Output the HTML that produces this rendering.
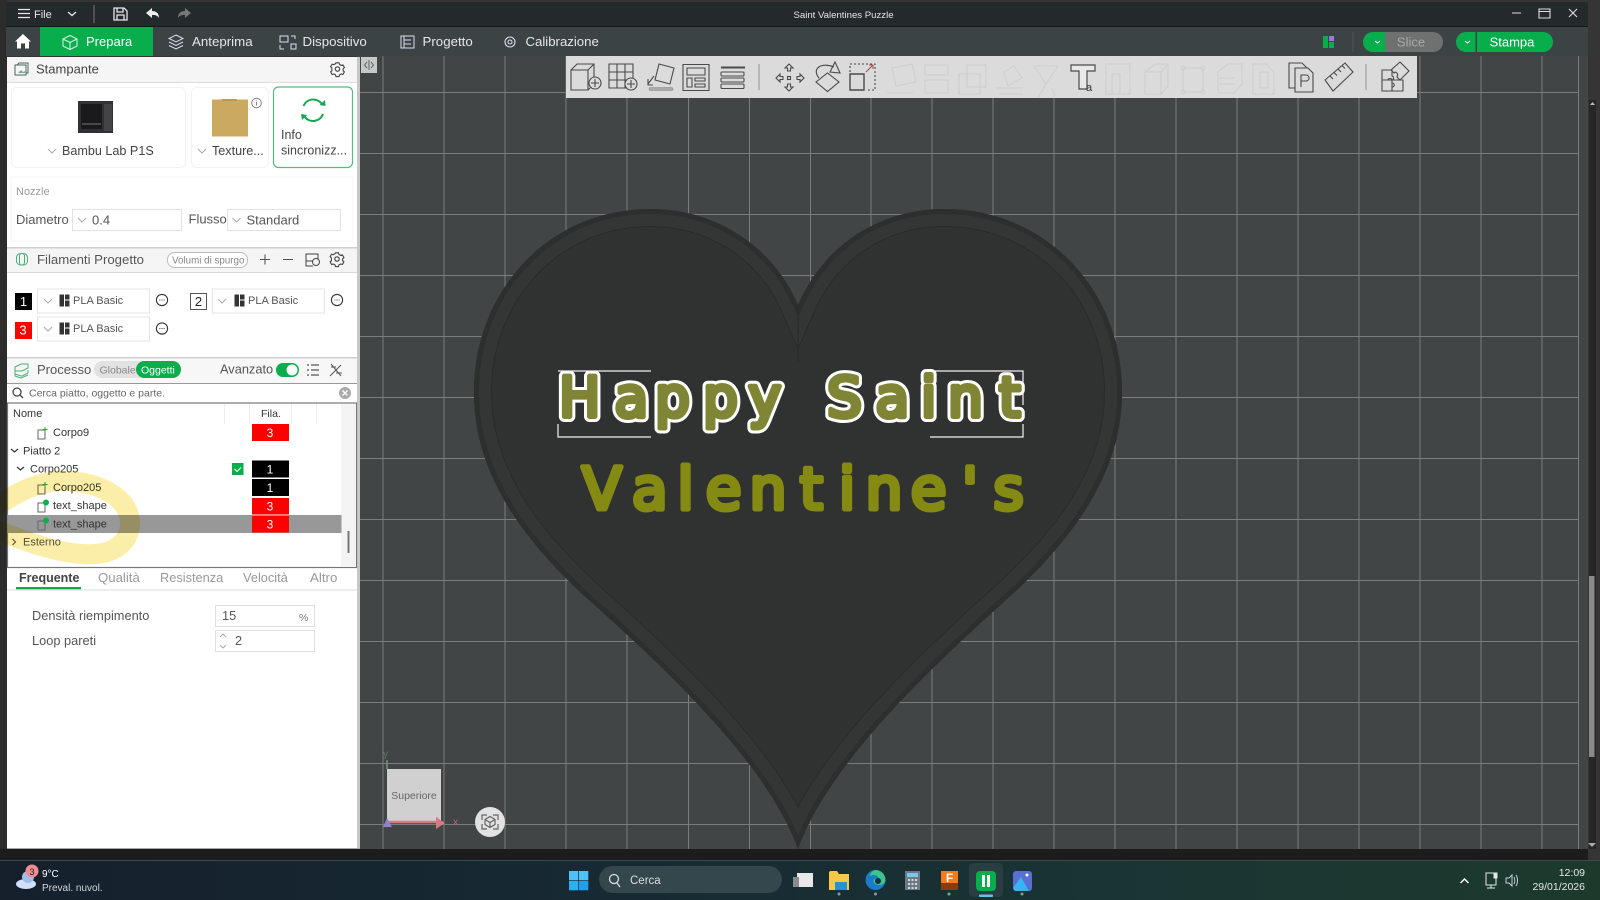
<!DOCTYPE html>
<html><head><meta charset="utf-8"><title>Saint Valentines Puzzle</title>
<style>
html,body{margin:0;padding:0;background:#333;width:1600px;height:900px;overflow:hidden}
svg{display:block;font-family:"Liberation Sans",sans-serif;filter:blur(.3px)}
</style></head><body>
<svg width="1600" height="900" viewBox="0 0 1600 900" xmlns="http://www.w3.org/2000/svg">
<defs>
<linearGradient id="tb" x1="0" x2="1" y1="0" y2="0"><stop offset="0" stop-color="#15202c"/><stop offset=".4" stop-color="#172a33"/><stop offset=".75" stop-color="#1a3633"/><stop offset="1" stop-color="#1b3a2c"/></linearGradient>
<clipPath id="hc"><path id="hp" d="M798 305C772 245 715 209 650 209C550 209 474 290 474 392C474 470 518 538 598 608C680 682 770 770 798 849C826 770 915 682 997 608C1077 538 1122 470 1122 392C1122 290 1046 209 944 209C880 209 824 245 798 305Z"/></clipPath>
<g id="chev"><path d="M-4-2 0 2 4-2" fill="none" stroke="#aaa" stroke-width="1"/></g>
<g id="gear" fill="none" stroke="#444" stroke-width="1.100"><circle r="2.2"/><path d="M-1.5-6.200h3l.5 1.700 1.700.9 1.700-.5 1.500 2.600-1.300 1.300v1.900l1.300 1.200-1.500 2.600-1.700-.5-1.700.9-.5 1.700h-3l-.5-1.700-1.700-.9-1.700.5-1.500-2.600 1.300-1.200V-1l-1.300-1.300 1.500-2.600 1.700.5 1.700-.9z"/></g>
<g id="more" fill="none" stroke="#333" stroke-width="1.100"><circle r="5.600"/><path d="M-2.600 0h.9M-.5 0h1M1.700 0h.9"/></g>
<g id="pla" fill="#333"><rect x="0" y="0" width="4.500" height="11"/><rect x="5.500" y="0" width="4.500" height="5"/><rect x="5.500" y="6" width="4.500" height="6"/><rect x="0" y="7" width="4.500" height="5"/></g>
<g id="obj" fill="none" stroke="#666" stroke-width="1"><path d="M1 3h7v9H1z"/><path d="M8 0v5M5.500 2.500h5" stroke="#2a2"/></g>
<g id="dot" fill="none"><path d="M1 3h7v9H1z" stroke="#666"/><circle cx="9" cy="2.500" r="3" fill="#09b04c"/></g>
</defs>

<!-- window bg -->
<rect width="1600" height="900" fill="#353535"/>
<rect x="0" y="0" width="7" height="860" fill="#2c2c2c"/>
<rect x="6" y="2" width="1582" height="25" fill="#24292c"/>
<rect x="6" y="27" width="1582" height="29" fill="#3c4345"/>
<rect x="6" y="26" width="1582" height="1" fill="#15191b"/>

<!-- viewport -->
<rect x="357" y="56" width="1231" height="793" fill="#414545"/>
<g stroke="#7a7d7d" stroke-width="1" fill="none">
<path d="M383 56V849M444 56V849M505 56V849M566 56V849M627 56V849M688.500 56V849M749.500 56V849M810.500 56V849M871 56V849M932 56V849M993 56V849M1054 56V849M1115 56V849M1176 56V849M1237 56V849M1298 56V849M1359 56V849M1420 56V849M1481 56V849M1542 56V849M1578.500 56V849"/>
<path d="M357 92.500H1578M357 153.500H1578M357 214.500H1578M357 275.500H1578M357 336.500H1578M357 397.500H1578M357 458.500H1578M357 519.500H1578M357 580.500H1578M357 641.500H1578M357 702.500H1578M357 763.500H1578M357 824.500H1578"/>
</g>
<rect x="0" y="849" width="1600" height="11" fill="#1c1c1c"/>
<rect x="1588" y="56" width="12" height="804" fill="#353535"/>
<rect x="1589" y="100" width="7" height="749" fill="#262626"/>
<rect x="1589" y="576" width="5.500" height="181" fill="#8a8a8a"/>
<path d="M1590 105l2.500-3 2.500 3z" fill="#bbb"/><path d="M1588 843h8l-4 4z" fill="#aaa"/>

<!-- heart -->
<use href="#hp" fill="#303131"/>
<g clip-path="url(#hc)" fill="none">
<use href="#hp" stroke="#292b2b" stroke-width="36"/>
<use href="#hp" stroke="#343635" stroke-width="34"/>
<use href="#hp" stroke="#2d2f2f" stroke-width="10"/>
</g>
<path d="M798 305V362" stroke="#2a2a2a" stroke-width="1.200"/>

<!-- Happy Saint -->
<g font-size="55" font-family="DejaVu Sans" stroke-linejoin="round" stroke-linecap="round">
<text y="416.500" x="559 614.500 655 703 748.500 800 827 875.500 921 948 999" fill="#fff" stroke="#fff" stroke-width="11">Happy Saint</text>
<text y="416.500" x="559 614.500 655 703 748.500 800 827 875.500 921 948 999" fill="#808535" stroke="#808535" stroke-width="5">Happy Saint</text>
</g>
<g font-size="58" font-family="DejaVu Sans" stroke-linejoin="round"><text y="509" x="582 632 677.500 705.700 749.600 800 839 865.600 910.700 962 993.500" fill="#858a12" stroke="#858a12" stroke-width="5">Valentine's</text></g>
<path d="M558 371H651M558 424V437H651M933 371H1023V405M1023 424V437H930" stroke="#f4f4f4" fill="none" stroke-width="1.200"/>

<!-- top toolbar -->
<rect x="566" y="56" width="851" height="42" fill="#dadbda"/>
<g fill="none" stroke="#4a4a4a" stroke-width="1.100">
<path d="M571 70h17v20h-17zM571 70l6-6h17v20l-6 6M588 70l6-6"/><circle cx="595" cy="83" r="6" fill="#dadbda"/><path d="M595 79v8M591 83h8"/>
<path d="M609 64h24v24h-24zM617 64v24M625 64v24M609 72h24M609 80h24"/><circle cx="631" cy="84" r="6" fill="#dadbda"/><path d="M631 80v8M627 84h8"/>
<path d="M659 64l15 4-4 16-15-4zM654 76l-6 8M648 79v6h5"/><rect x="649" y="87.500" width="24" height="3" rx="1.500" fill="#aaa" stroke="#888" stroke-width=".6"/>
<path d="M683 64.500h26v26h-26zM687 68h18v7h-18zM687 78h5v9h-5zM695 78h10v3h-10zM695 84h10v3h-10z"/>
<path d="M721 67.500h24" stroke-width="2"/><rect x="721" y="72" width="23" height="4" rx="1"/><rect x="721" y="78" width="23" height="4" rx="1"/><rect x="721" y="84" width="23" height="4.500" rx="1"/>
<path d="M759 64v26" stroke="#999"/>
<path d="M789 64l-4 4h2.500v3h3v-3h2.500zM789 91l-4-4h2.500v-3h3v3h2.500zM776 78l4-4v2.500h3v3h-3v2.500zM804 78l-4-4v2.500h-3v3h3v2.500z"/><rect x="787.500" y="76.500" width="3" height="3"/>
<path d="M819 78C811 68 822 62 834 67"/><path d="M835 62l5 11-10-1zM827.500 73l11.500 9-11.500 9.500-11.500-9.500z"/>
<path d="M850 74h14v16h-14z" stroke-width="1.400"/><path d="M850 72V64h25v26h-9" stroke-dasharray="2 2"/><path d="M866 72l7-7M869 65h4v4" stroke="#a55"/>
</g>
<g fill="none" stroke="#cdcecd" stroke-width="1">
<path d="M892 68l20-4 4 18-20 4zM887 93h26"/>
<path d="M925 65h23v10h-23zM925 80h23v13h-23z"/>
<path d="M967 65h19v22h-19zM959 74h21v20h-21z"/>
<path d="M996 88h27M999 94h24M1004 72l10-6 8 12-14 8z"/>
<path d="M1034 66l24 0-12 18zM1046 84l-8 14M1052 88l3 8"/>
<path d="M1106 64h24v30h-24zM1112 74h8v20h-8z"/>
<path d="M1145 72h16v22h-16zM1145 72l10-8h13v22l-7 8M1161 72l7-8"/>
<path d="M1183 68h20v24h-20z"/><circle cx="1183" cy="68" r="2"/><circle cx="1203" cy="68" r="2"/><circle cx="1183" cy="92" r="2"/><circle cx="1203" cy="92" r="2"/>
<path d="M1218 72l10-8h14v20l-8 9h-16zM1218 78h16M1218 84h16"/>
<path d="M1253 64h13l8 8v22h-21zM1260 72h8v16h-8z"/>
</g>
<g fill="none" stroke="#4a4a4a" stroke-width="1.100">
<path d="M1289 63h13l5 5v20h-18z" fill="#dadbda"/><path d="M1295 68h13l5 5v19h-18z" fill="#dadbda"/><path d="M1301 87V75h5c4 0 4 6 0 6h-5"/>
<path d="M1325 80l20-17 8 9-20 19zM1330 76l3 3M1334 72.500l3 3M1338 69l3 3M1342 65.500l3 3"/>
<path d="M1366 64v26" stroke="#999"/>
<path d="M1382 70H1392V76C1394 76 1394 80 1392 80H1382ZM1382 80H1388C1388 78 1392 78 1392 80V91H1382ZM1392 80H1403V91H1392V87C1395 87 1395 83 1392 83ZM1391 70L1400 62L1409 71L1400 80L1397 77C1399 73 1395 71 1394 73Z"/>
</g>
<path d="M1071 65h24v6h-8v18h-8v-18h-8z" fill="#e8e8e8" stroke="#4a4a4a" stroke-width="1.200"/>
<text x="1086" y="91" font-size="11" fill="#333">a</text>

<!-- collapse btn -->
<rect x="361" y="57" width="16" height="16" fill="#c7c8c8"/>
<path d="M367 62l-2.500 3 2.500 3M371 62l2.500 3-2.500 3M369 60v10" fill="none" stroke="#666"/>

<!-- title bar -->
<g fill="none" stroke="#e8e8e8" stroke-width="1.300">
<path d="M18 9.500h12M18 13.500h12M18 17.500h12"/>
<path d="M68 12l4 3.500 4-3.500"/>
<path d="M94 5v18" stroke="#666"/>
<path d="M114 8h10l3 3v9h-13zM117 8v4h6V8M117 20v-5h7v5"/>
</g>
<text x="34" y="18" font-size="11" fill="#e8e8e8">File</text>
<path d="M146 13l6-5v3c4 0 7 2 7 7-2-3-4-3-7-3v3z" fill="#eee"/>
<path d="M191 13l-6-5v3c-4 0-7 2-7 7 2-3 4-3 7-3v3z" fill="#777"/>
<text x="843.500" y="18" font-size="9.600" fill="#e4e4e4" text-anchor="middle">Saint Valentines Puzzle</text>
<g fill="none" stroke="#ddd" stroke-width="1.100">
<path d="M1512 13h9" stroke-width="1.600" stroke="#999"/>
<path d="M1539 9h11v9h-11zM1539 11.500h11"/>
<path d="M1569 9l8 8M1577 9l-8 8"/>
</g>

<!-- menu bar -->
<path d="M15 41.500l8-7.500 8 7.500h-2v7h-4v-5h-4v5h-4v-7z" fill="#fff"/>
<rect x="40" y="27" width="113" height="29" fill="#09ae4c"/>
<g fill="none" stroke="#cfeedd" stroke-width="1.100"><path d="M70 35.500l7 3.500v7l-7 3.500-7-3.500v-7zM63 39l7 3.500 7-3.500M70 42.500v7"/></g>
<text x="86" y="46" font-size="13" fill="#fff">Prepara</text>
<g fill="none" stroke="#dde" stroke-width="1"><path d="M176 35l7 3.500-7 3.500-7-3.500zM169 42l7 3.500 7-3.500M169 45.500l7 3.500 7-3.500"/></g>
<text x="192" y="46" font-size="13.300" fill="#e6e6e6">Anteprima</text>
<g fill="none" stroke="#dde" stroke-width="1"><path d="M280 36h8v6h-8zM291 36h4v3M280 45v4h4M291 44h5v5h-5z"/></g>
<text x="302.500" y="46" font-size="13.300" fill="#e6e6e6">Dispositivo</text>
<g fill="none" stroke="#dde" stroke-width="1"><path d="M401 36h13v12h-13zM404 40h7M404 44h7M401 36h3v12"/></g>
<text x="422.500" y="46" font-size="13.300" fill="#e6e6e6">Progetto</text>
<g fill="none" stroke="#dde" stroke-width="1.100"><circle cx="510" cy="42" r="2"/><circle cx="510" cy="42" r="5"/></g>
<text x="525.500" y="46" font-size="13.200" fill="#e6e6e6">Calibrazione</text>
<rect x="1323" y="36" width="5" height="12" fill="#09ae4c"/><rect x="1329" y="42" width="5" height="6" fill="#09ae4c"/><rect x="1329" y="36" width="5" height="5" fill="#9b7ae0"/>
<path d="M1353 32v20" stroke="#555"/>
<path d="M1385 32h-12a10 10 0 0 0 0 20h12z" fill="#09ae4c"/>
<path d="M1385 32h48a10 10 0 0 1 0 20h-48z" fill="#6f7070"/>
<text x="1411" y="46.500" font-size="13" fill="#a9a9a9" text-anchor="middle">Slice</text>
<path d="M1375 41l2.500 2 2.500-2" stroke="#fff" fill="none"/>
<path d="M1475.500 32h-9.500a10 10 0 0 0 0 20h9.500z" fill="#09ae4c"/>
<path d="M1477 32h66a10 10 0 0 1 0 20h-66z" fill="#09ae4c"/>
<text x="1512" y="46.500" font-size="13" fill="#fff" text-anchor="middle">Stampa</text>
<path d="M1465 41l2.500 2 2.500-2" stroke="#fff" fill="none"/>

<!-- left panel -->
<rect x="7" y="57" width="350" height="791" fill="#fff"/>
<rect x="357" y="57" width="3" height="792" fill="#c6c8c8"/>
<rect x="7" y="848" width="353" height="1" fill="#aaa"/>

<!-- stampante -->
<rect x="7" y="57" width="350" height="25" fill="#f5f5f5"/><rect x="7" y="82" width="350" height="1" fill="#ddd"/>
<g fill="none" stroke="#4a6660" stroke-width="1"><path d="M15 65h11v10h-11zM17 65l2-2h9v10h-2"/><path d="M18 73l3-3 2 2 2-1v2h-7z" fill="#7a9" stroke="none"/></g>
<text x="36" y="73.500" font-size="13" fill="#444">Stampante</text>
<use href="#gear" x="337.500" y="69"/>
<rect x="11.500" y="87.500" width="174" height="80" rx="5" fill="#fff" stroke="#f2f2f2"/>
<rect x="191.500" y="87.500" width="77" height="80" rx="5" fill="#fff" stroke="#f2f2f2"/>
<rect x="273.500" y="87" width="79" height="80.500" rx="5" fill="#fff" stroke="#55bb80" stroke-width="1.200"/>
<rect x="78" y="101" width="35" height="32" fill="#313133"/><rect x="81" y="104" width="21" height="25" fill="#1a1a1c"/><rect x="104" y="104" width="8" height="27" fill="#444446"/><path d="M82 124h19" stroke="#777"/>
<text x="62" y="155" font-size="12.600" fill="#444">Bambu Lab P1S</text><use href="#chev" x="52" y="151"/>
<rect x="212" y="99.500" width="36" height="37" fill="#cca961"/><rect x="222" y="99" width="15" height="2" fill="#bb9a58"/>
<circle cx="256.500" cy="103" r="4.800" fill="none" stroke="#888"/><path d="M256.500 102v3.500M256.500 100.200v.8" stroke="#888"/>
<text x="212" y="155" font-size="12.600" fill="#444">Texture...</text><use href="#chev" x="202" y="151"/>
<g fill="none" stroke="#14a94f" stroke-width="2"><path d="M303.500 106a10.500 10.500 0 0 1 18-2.500"/><path d="M323 114a10.500 10.500 0 0 1-18.500 2.500"/></g>
<path d="M325.500 106l-6-1 5.500-5zM301 114l6 1-5 5z" fill="#14a94f"/>
<text x="281" y="139" font-size="12.500" fill="#444">Info</text>
<text x="281" y="154.500" font-size="12.500" fill="#444">sincronizz...</text>

<!-- nozzle -->
<rect x="11" y="177" width="342" height="64" fill="#fff" stroke="#f5f5f5"/>
<text x="16" y="195" font-size="11" fill="#999">Nozzle</text>
<text x="16" y="224" font-size="13" fill="#555">Diametro</text>
<rect x="72.500" y="209.500" width="109" height="21" fill="#fff" stroke="#e2e2e2"/><use href="#chev" x="82" y="220"/>
<text x="92" y="224.500" font-size="13" fill="#555">0.4</text>
<text x="188.500" y="223.500" font-size="13" fill="#555">Flusso</text>
<rect x="227.500" y="209.500" width="113" height="21" fill="#fff" stroke="#e2e2e2"/><use href="#chev" x="236.500" y="220"/>
<text x="246.500" y="224.500" font-size="13" fill="#555">Standard</text>

<!-- filamenti -->
<rect x="7" y="247" width="350" height="25" fill="#f5f5f5"/><rect x="7" y="247" width="350" height="1.500" fill="#cfcfcf"/><rect x="7" y="272" width="350" height="1" fill="#d8d8d8"/>
<g fill="none" stroke="#4caf78" stroke-width="1"><rect x="16.500" y="253.500" width="11" height="11.500" rx="4"/><rect x="19.500" y="253.500" width="5" height="11.500" rx="2.500"/></g>
<text x="37" y="264" font-size="13.200" fill="#555">Filamenti Progetto</text>
<rect x="167.500" y="252.500" width="80" height="15" rx="7" fill="#fff" stroke="#bbb"/>
<text x="172" y="263.500" font-size="9.800" fill="#888">Volumi di spurgo</text>
<path d="M260 259.500h10M265 254.500v10M283 259.500h10" stroke="#555" stroke-width="1.100"/>
<g fill="none" stroke="#444"><path d="M306 254h12v7h-12zM306 254v12h7"/></g><circle cx="316" cy="262" r="3.500" fill="#f5f5f5" stroke="#444"/>
<use href="#gear" x="337" y="259"/>

<rect x="15" y="293" width="17" height="17" fill="#000"/><text x="23.500" y="306" font-size="13" fill="#fff" text-anchor="middle">1</text>
<rect x="37.500" y="289" width="112" height="24" fill="#fff" stroke="#e5e5e5"/><use href="#chev" x="48" y="301"/>
<use href="#pla" x="59.500" y="294.500"/><text x="73" y="304" font-size="11" fill="#555">PLA Basic</text><use href="#more" x="162" y="300"/>
<rect x="190.500" y="293.500" width="16" height="16" fill="#fff" stroke="#555"/><text x="198.500" y="306" font-size="13" fill="#222" text-anchor="middle">2</text>
<rect x="212.500" y="289" width="112" height="24" fill="#fff" stroke="#e5e5e5"/><use href="#chev" x="222" y="301"/>
<use href="#pla" x="234.500" y="294.500"/><text x="248" y="304" font-size="11" fill="#555">PLA Basic</text><use href="#more" x="337" y="300"/>
<rect x="15" y="322" width="17" height="17" fill="#f00"/><text x="23" y="334.500" font-size="13" fill="#fff" text-anchor="middle">3</text>
<rect x="37.500" y="317" width="112" height="24" fill="#fff" stroke="#e5e5e5"/><use href="#chev" x="48" y="329"/>
<use href="#pla" x="59.500" y="322.500"/><text x="73" y="332" font-size="11" fill="#555">PLA Basic</text><use href="#more" x="162" y="328.500"/>

<!-- processo -->
<rect x="7" y="357" width="350" height="26" fill="#f7f7f7"/><rect x="7" y="357" width="350" height="1.500" fill="#cfcfcf"/>
<g fill="none" stroke="#4caf78" stroke-width="1"><path d="M15 367l6-3h7v4l-6 3h-7zM15 371v3l6 2h1l6-3v-3M15 374v2l6 2 7-3"/></g>
<text x="37" y="374" font-size="13" fill="#555">Processo</text>
<rect x="94" y="361" width="87" height="17" rx="8.500" fill="#e2e2e2"/>
<rect x="136" y="361" width="45" height="17" rx="8.500" fill="#09ae4c"/>
<text x="99.500" y="373.500" font-size="10.500" fill="#888">Globale</text>
<text x="141" y="373.500" font-size="10.500" fill="#fff">Oggetti</text>
<text x="220" y="373.500" font-size="12.800" fill="#555">Avanzato</text>
<rect x="276" y="363" width="23" height="14" rx="7" fill="#09ae4c"/><circle cx="292" cy="370" r="5.500" fill="#fff"/>
<path d="M307 365h2M307 370h2M307 375h2M311 365h8M311 370h8M311 375h8" stroke="#555" stroke-width="1.200"/>
<path d="M331 364l10 12M341 365l-11 11M331 367h5M336 373h6" stroke="#555" stroke-width="1" fill="none"/>

<rect x="7" y="383" width="350" height="19" fill="#fff"/><rect x="7" y="383" width="350" height="1" fill="#999"/>
<circle cx="17" cy="392" r="4" fill="none" stroke="#444" stroke-width="1.300"/><path d="M20 395l3 3" stroke="#444" stroke-width="1.300"/>
<text x="29" y="396.500" font-size="10.500" fill="#666">Cerca piatto, oggetto e parte.</text>
<circle cx="345" cy="393" r="6" fill="#aaa"/><path d="M342.500 390.500l5 5M347.500 390.500l-5 5" stroke="#fff" stroke-width="1.300"/>

<!-- tree -->
<rect x="7.500" y="403" width="349" height="164.500" fill="#fff" stroke="#777" stroke-width="1.200"/>
<rect x="341" y="404" width="15" height="163" fill="#f4f4f4"/>
<path d="M224.500 404v20M249.500 404v20M291.500 404v20M316.500 404v20" stroke="#eee"/>
<text x="13" y="417" font-size="11" fill="#333">Nome</text>
<text x="261" y="417" font-size="10.500" fill="#333">Fila.</text>
<rect x="7.500" y="515" width="334" height="18" fill="#989898"/>
<use href="#obj" x="37" y="427"/><text x="53" y="436" font-size="11" fill="#333">Corpo9</text>
<rect x="252" y="424" width="37" height="17" fill="#f00"/><text x="270" y="437" font-size="12" fill="#fff" text-anchor="middle">3</text>
<path d="M11 449l3.500 3 3.500-3" fill="none" stroke="#333" stroke-width="1.200"/><text x="23" y="454.500" font-size="11" fill="#333">Piatto 2</text>
<path d="M17 467l3.500 3 3.500-3" fill="none" stroke="#333" stroke-width="1.200"/><text x="30" y="472.500" font-size="11" fill="#333">Corpo205</text>
<rect x="232" y="463" width="11.500" height="12" fill="#09ae4c"/><path d="M234.500 469l2.500 2.500 4-4" fill="none" stroke="#fff"/>
<rect x="252" y="460.500" width="37" height="17" fill="#000"/><text x="270" y="473.500" font-size="12" fill="#fff" text-anchor="middle">1</text>
<use href="#obj" x="37" y="482"/><text x="53" y="491" font-size="11" fill="#333">Corpo205</text>
<rect x="252" y="479" width="37" height="17" fill="#000"/><text x="270" y="492" font-size="12" fill="#fff" text-anchor="middle">1</text>
<use href="#dot" x="37" y="500"/><text x="53" y="509" font-size="11" fill="#333">text_shape</text>
<rect x="252" y="498" width="37" height="16.500" fill="#f00"/><text x="270" y="510.500" font-size="12" fill="#fff" text-anchor="middle">3</text>
<use href="#dot" x="37" y="518"/><text x="53" y="527.500" font-size="11" fill="#333">text_shape</text>
<rect x="252" y="516" width="37" height="16.500" fill="#f00"/><text x="270" y="528.500" font-size="12" fill="#fff" text-anchor="middle">3</text>
<path d="M12.500 539l3 3-3 3" fill="none" stroke="#555" stroke-width="1.100"/><text x="23" y="545.500" font-size="11" fill="#555">Esterno</text>
<rect x="347.500" y="531" width="2" height="22" fill="#777"/>
<!-- yellow scribble -->
<path d="M-8 509C15 494 35 481 65 481C100 482 129 498 130 522C131 541 115 553 95 554C70 556 35 546 -8 528" fill="none" stroke="#fbeea8" stroke-width="20" stroke-linecap="round" stroke-linejoin="round" style="mix-blend-mode:multiply"/>

<!-- tabs -->
<rect x="7" y="569" width="350" height="21" fill="#fff"/>
<text x="19" y="582" font-size="12.500" font-weight="bold" fill="#444">Frequente</text>
<text x="98" y="582" font-size="13.200" fill="#999">Qualità</text>
<text x="160" y="582" font-size="12.800" fill="#999">Resistenza</text>
<text x="243" y="582" font-size="12.800" fill="#999">Velocità</text>
<text x="310" y="582" font-size="13.300" fill="#999">Altro</text>
<rect x="7" y="589.500" width="350" height="1" fill="#ddd"/>
<rect x="16" y="587" width="65" height="2.300" fill="#09ae4c"/>
<text x="32" y="620" font-size="12.800" fill="#555">Densità riempimento</text>
<rect x="215.500" y="605.500" width="99" height="21" fill="#fff" stroke="#e0e0e0"/>
<text x="222" y="620" font-size="12.800" fill="#555">15</text><text x="299" y="621" font-size="10.500" fill="#777">%</text>
<text x="32" y="645" font-size="12.800" fill="#555">Loop pareti</text>
<rect x="215.500" y="630.500" width="99" height="21" fill="#fff" stroke="#e0e0e0"/>
<path d="M220 637l3-3 3 3M220 645l3 3 3-3" fill="none" stroke="#aaa"/>
<text x="235" y="645" font-size="12.800" fill="#555">2</text>

<!-- gizmo -->
<rect x="387" y="769" width="54" height="54" fill="#cfd0cf"/>
<text x="414" y="799" font-size="10.500" fill="#666" text-anchor="middle">Superiore</text>
<path d="M387 822h50" stroke="#d47a80" stroke-width="2.500"/><path d="M436 817l9 6-9 6z" fill="#d47a80"/>
<path d="M387 818l-4 9h9z" fill="#8a85cc"/><path d="M387 769v-9" stroke="#6a9a70" stroke-width="1.500"/>
<text x="383" y="757" font-size="10" fill="#5d7468">y</text><text x="453" y="825" font-size="10" fill="#b96a70">x</text>
<circle cx="490" cy="822" r="15" fill="#e2e2e2"/>
<g fill="none" stroke="#666" stroke-width="1.200"><path d="M482 820v-5h5M493 815h5v5M498 824v5h-5M487 829h-5v-5"/><path d="M490 816.500l5 3v5l-5 3-5-3v-5zM485 819.500l5 3 5-3M490 822.500v5"/></g>

<!-- taskbar -->
<rect y="860" width="1600" height="40" fill="url(#tb)"/>
<rect y="860" width="1600" height="1" fill="#3a4a4a"/>
<ellipse cx="26" cy="884" rx="10" ry="5" fill="#cfe0f8"/><circle cx="28" cy="877" r="6" fill="#9fbfe9"/>
<circle cx="32" cy="871" r="6.500" fill="#f08c94"/><text x="32" y="875" font-size="9" fill="#222" text-anchor="middle">3</text>
<text x="42" y="877" font-size="10" fill="#fff">9°C</text>
<text x="42" y="891" font-size="10" fill="#cfd6d8">Preval. nuvol.</text>
<g fill="#4cc2f5"><rect x="569" y="871" width="9.300" height="9.300"/><rect x="579" y="871" width="9.300" height="9.300"/></g>
<g fill="#1e9fe8"><rect x="569" y="881" width="9.300" height="9.300" fill="#2bb0f0"/><rect x="579" y="881" width="9.300" height="9.300"/></g>
<rect x="599" y="866" width="183" height="27" rx="13.500" fill="#34474d"/>
<circle cx="614" cy="879" r="4.500" fill="none" stroke="#ddd" stroke-width="1.300"/><path d="M617 883l3 4" stroke="#ddd" stroke-width="1.300"/>
<text x="630" y="884" font-size="11.500" fill="#ddd">Cerca</text>
<rect x="797" y="873" width="16" height="14" fill="#e8e8e8"/><rect x="793" y="877" width="6" height="10" fill="#8a8a8a"/>
<path d="M829 873a2 2 0 0 1 2-2h6l2 3h10v16h-20z" fill="#f7c844"/><rect x="835" y="882" width="12" height="8" fill="#2b8fd0"/>
<circle cx="875.500" cy="880" r="10" fill="#1a7cc8"/><path d="M876 870a10 10 0 0 1 9.500 10c0 3-3 5-6 5-4 0-6-2-6-4s3-3 5-3c-1-3-5-4-9-2 1-3 3-6 6.500-6z" fill="#3cc48a"/><circle cx="878" cy="881" r="3" fill="#14303a"/>
<rect x="905" y="871" width="15" height="19" fill="#6b7a84"/><rect x="907" y="873" width="11" height="4" fill="#7cc6e8"/><path d="M908 880h9M908 884h9M908 888h9" stroke="#cfd8dc" stroke-width="2" stroke-dasharray="2 1.500"/>
<path d="M941 871h17v15l-3 4h-14z" fill="#f47a1c"/><rect x="941" y="883" width="17" height="7" fill="#8a3c10"/><text x="949.500" y="882" font-size="12" font-weight="bold" fill="#fff" text-anchor="middle">F</text>
<rect x="969" y="863" width="34" height="34" rx="4" fill="#2a3d42"/>
<rect x="976" y="871" width="20" height="20" rx="4" fill="#09ae4c"/><path d="M982 875h3v12h-3zM987 875h3v12h-3z" fill="#fff"/>
<rect x="979" y="894.500" width="14" height="2.500" rx="1" fill="#5fc3ea"/>
<rect x="1013" y="871" width="19" height="20" rx="3" fill="#5a6fd0"/><path d="M1013 888l8-11 8 14h-14z" fill="#36b5f0"/><circle cx="1027" cy="875" r="1.500" fill="#fff"/>
<g fill="#8a9a9e"><circle cx="839" cy="894" r="1.500"/><circle cx="875.500" cy="894" r="1.500"/><circle cx="949" cy="894" r="1.500"/><circle cx="1022" cy="894" r="1.500"/></g>
<path d="M1460.500 883l4-4 4 4" fill="none" stroke="#fff" stroke-width="1.400"/>
<g fill="none" stroke="#e8e8e8"><path d="M1486 873h10v12h-10zM1491 885v3M1487 888h8"/><rect x="1494" y="873" width="3" height="5" fill="#e8e8e8"/></g>
<path d="M1506 878h3l3-3v11l-3-3h-3zM1514 877c1 2 1 5 0 7M1516 875c2 3 2 8 0 11" fill="none" stroke="#ccd" stroke-width="1"/>
<text x="1585" y="876" font-size="10.500" fill="#e8e8e8" text-anchor="end">12:09</text>
<text x="1585" y="890" font-size="10.500" fill="#e8e8e8" text-anchor="end">29/01/2026</text>
</svg>
</body></html>
